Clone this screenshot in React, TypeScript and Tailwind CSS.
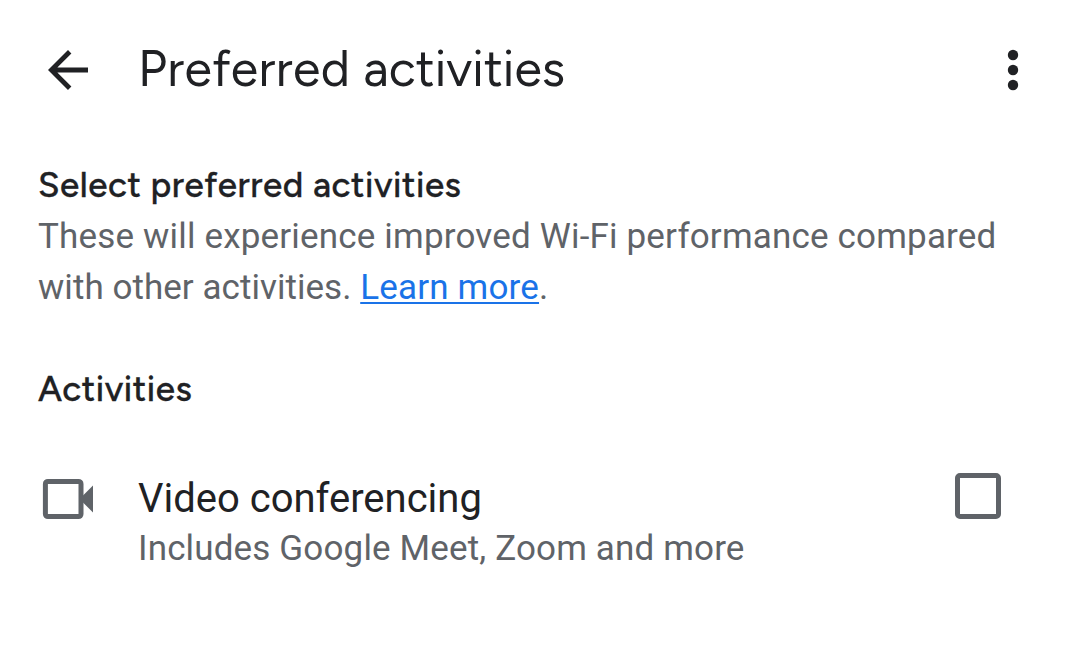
function BackArrow() {
  return (
    <svg width="40" height="40" viewBox="0 0 40 40" fill="none" stroke="currentColor" strokeWidth="4.8">
      <path d="M21.7 1.7 3.4 20l18.3 18.3M3.4 20H40" />
    </svg>
  );
}

function MoreDots() {
  return (
    <svg className="overflow-visible" width="10" height="40" viewBox="0 0 10 40" fill="currentColor">
      <circle cx="5" cy="5" r="5.2" />
      <circle cx="5" cy="20" r="5.2" />
      <circle cx="5" cy="35" r="5.2" />
    </svg>
  );
}

function CameraIcon() {
  return (
    <svg className="overflow-visible blur-[0.6px]" width="52" height="42" viewBox="0 0 52 42" fill="none">
      <rect x="3.4" y="3.4" width="35.6" height="35.2" rx="2.5" stroke="#5f6368" strokeWidth="5" />
      <path d="M40 18.5 51 7.5v27L40 23.5Z" fill="#5f6368" />
    </svg>
  );
}

export default function App() {
  return (
    <main className="flex h-[671px] w-[1078px] flex-col bg-white font-['Roboto',sans-serif] text-[#202124]">
      <header className="flex h-[140px] items-center pl-[48px] pr-[60px]">
        <button aria-label="Back" className="mr-[50px]">
          <BackArrow />
        </button>
        <h1 className="mb-[2px] grow whitespace-nowrap font-['Google_Sans','Product_Sans','Figtree','Lato',sans-serif] text-[50px] leading-none">
          <span className="tracking-[0.4px]">Preferred </span>activities
        </h1>
        <button aria-label="More options">
          <MoreDots />
        </button>
      </header>
      <section className="pl-[38px] pt-[20px]">
        <h2 className="w-fit whitespace-nowrap font-['Google_Sans','Product_Sans','Figtree','Inter',sans-serif] text-[35px] font-medium leading-[51px] tracking-[0.54px] [-webkit-text-stroke:0.3px_#202124]">
          Select preferred activities
        </h2>
        <p className="w-fit whitespace-nowrap text-[35px] leading-[51px] tracking-[0.175px] text-[#5f6368]">
          These will experience improved Wi-Fi performance compared
          <br />
          <span className="tracking-[0.04px]">with other activities. </span>
          <a href="#" className="text-[#1a73e8] underline decoration-[2px] underline-offset-[3px]">
            Learn more
          </a>
          .
        </p>
      </section>
      <section className="pl-[38px] pt-[51px]">
        <h2 className="w-fit font-['Google_Sans','Product_Sans','Figtree','Inter',sans-serif] text-[35px] font-medium leading-[51px] tracking-[0.54px] [-webkit-text-stroke:0.3px_#202124]">
          Activities
        </h2>
      </section>
      <label className="flex items-start pl-[42px] pr-[77px] pt-[57px]">
        <span className="mr-[44px] mt-[6px]">
          <CameraIcon />
        </span>
        <span className="grow">
          <span className="block w-fit text-[40px] leading-[53px]">Video conferencing</span>
          <span className="block w-fit text-[35px] leading-[47px] tracking-[0.15px] text-[#5f6368]">
            Includes Google Meet, Zoom and more
          </span>
        </span>
        <input
          type="checkbox"
          aria-label="Video conferencing"
          className="mt-px size-[46px] appearance-none rounded-[5px] border-[5px] border-[#5f6368] bg-white"
        />
      </label>
    </main>
  );
}
